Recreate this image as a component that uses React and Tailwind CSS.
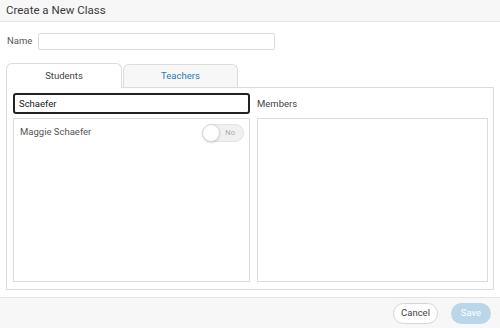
import { useState } from "react";

export default function App() {
  const [name, setName] = useState("");
  const [search, setSearch] = useState("Schaefer");
  const [tab, setTab] = useState("students");
  const [on, setOn] = useState(false);

  return (
    <div
      className="w-[500px] h-[328px] bg-white flex flex-col text-[#333] overflow-hidden"
      style={{ fontFamily: "Roboto, 'Liberation Sans', sans-serif" }}
    >
      {/* Header */}
      <div className="h-[22px] shrink-0 bg-[#f7f7f7] border-b border-[#e3e3e3] px-[6px] flex items-center text-[11.5px] text-[#3a3a3a]">
        Create a New Class
      </div>

      {/* Name */}
      <div className="mt-[11px] px-[7px] flex items-center">
        <label className="text-[9.5px] text-[#555] w-[31px]">Name</label>
        <input
          className="w-[237px] h-[17px] border border-[#dcdcdc] rounded-[2px] text-[9.5px] px-[4px] outline-none"
          value={name}
          onChange={(e) => setName(e.target.value)}
        />
      </div>

      {/* Tabs */}
      <div className="mt-[13px] mx-[6px] flex flex-col">
        <div className="flex h-[24px] relative z-10">
          <button
            onClick={() => setTab("students")}
            className="w-[116px] h-[25px] bg-white border border-b-0 border-[#dcdcdc] rounded-t-[6px] text-[9.5px] text-[#444] flex items-center justify-center"
          >
            Students
          </button>
          <button
            onClick={() => setTab("teachers")}
            className="ml-[1px] w-[115px] h-[23px] mt-[1px] bg-[#f7f7f7] border border-b-0 border-[#dcdcdc] rounded-t-[6px] text-[9.5px] text-[#2a7ab8] flex items-center justify-center"
          >
            Teachers
          </button>
        </div>
        <div className="h-[203px] border border-[#dcdcdc] px-[6px] pt-[5px] pb-[7px] grid grid-cols-[237px_231px] gap-x-[7px]">
          <div className="flex flex-col">
            <input
              className="h-[21px] border-2 border-[#222] rounded-[3px] text-[9.5px] px-[4px] outline-none text-[#222]"
              value={search}
              onChange={(e) => setSearch(e.target.value)}
            />
            <div className="mt-[4px] flex-1 border border-[#dcdcdc]">
              <div className="h-[25px] flex items-center justify-between pl-[6px] pr-[5px] mt-[1px]">
                <span className="text-[9.5px] text-[#555]">Maggie Schaefer</span>
                <button
                  onClick={() => setOn(!on)}
                  className="w-[42px] h-[18px] rounded-full bg-[#f0f0f0] border border-[#e2e2e2] relative flex items-center justify-end pr-[8px]"
                >
                  <span className="absolute left-[-1px] top-[-1px] w-[18px] h-[18px] rounded-full bg-white border border-[#d8d8d8] shadow-[0_1px_2px_rgba(0,0,0,0.15)]" />
                  <span className="text-[7.5px] text-[#aaa]">No</span>
                </button>
              </div>
            </div>
          </div>
          <div className="flex flex-col">
            <div className="h-[21px] flex items-center text-[9.5px] text-[#444] pt-[1px]">
              Members
            </div>
            <div className="mt-[4px] flex-1 border border-[#dcdcdc]" />
          </div>
        </div>
      </div>

      {/* Footer */}
      <div className="mt-[7px] flex-1 bg-[#f7f7f7] border-t border-[#e3e3e3] flex items-center justify-end pr-[9px] gap-[13px]">
        <button className="w-[45px] h-[21px] rounded-full bg-white border border-[#d6d6d6] text-[9.5px] text-[#444]">
          Cancel
        </button>
        <button className="w-[40px] h-[21px] rounded-full bg-[#b9d7e9] text-[9.5px] text-white">
          Save
        </button>
      </div>
    </div>
  );
}
